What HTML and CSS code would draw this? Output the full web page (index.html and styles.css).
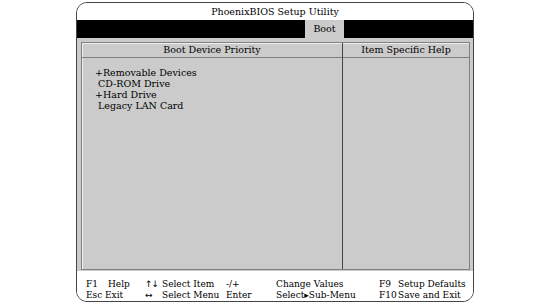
FILE: index.html
```html
<!DOCTYPE html>
<html lang="en">
<head>
  <meta charset="UTF-8" />
  <title>PhoenixBIOS Setup Utility</title>
  <link rel="stylesheet" href="styles.css">
</head>
<body>
  <div class="bios">
    <div class="title">PhoenixBIOS Setup Utility</div>
    <div class="menubar">
      <span class="tab">Boot</span>
    </div>

    <div class="workarea">
      <div class="panel">
        <div class="col main">
          <div class="head">Boot Device Priority</div>
          <ul class="devices">
            <li>+Removable Devices</li>
            <li class="leaf">CD-ROM Drive</li>
            <li>+Hard Drive</li>
            <li class="leaf">Legacy LAN Card</li>
          </ul>
        </div>
        <div class="col help">
          <div class="head">Item Specific Help</div>
        </div>
      </div>
    </div>

    <div class="keys">
      <span>F1</span><span class="wide">Help</span>
      <span class="arrows">&uarr;&darr;</span><span>Select Item</span>
      <span>-/+</span><span>Change Values</span>
      <span>F9</span><span>Setup Defaults</span>

      <span>Esc</span><span>Exit</span>
      <span class="arrows">&harr;</span><span>Select Menu</span>
      <span>Enter</span><span>Select&#9656;Sub-Menu</span>
      <span>F10</span><span>Save and Exit</span>
    </div>
  </div>
</body>
</html>
```

FILE: styles.css
```css
* { box-sizing: border-box; margin: 0; padding: 0; }
body {
  background: white;
  color: black;
  font-family: "DejaVu Serif", serif;
  font-size: 9.5px;
}

.bios {
  margin: 2px 0 0 76px;
  width: 398px;
  height: 300px;
  border: 1px solid #444;
  border-radius: 11px;
  overflow: hidden;
  display: flex;
  flex-direction: column;
}

.title {
  height: 17px;
  line-height: 17px;
  text-align: center;
  background: white;
}

.menubar {
  height: 18px;
  background: black;
  padding-left: 228px;
  display: flex;
}
.tab {
  width: 39px;
  background: #cbcbcb;
  text-align: center;
  line-height: 18px;
}

.workarea {
  height: 233px;
  background: #cbcbcb;
  padding: 4px 3px 1px 4px;
}

.panel {
  height: 100%;
  display: flex;
  border: 1px solid #808080;
  box-shadow: inset 1px 1px 0 #eee;
}

.col { display: flex; flex-direction: column; }
.main { flex: 1; border-right: 1px solid #444; }
.help { width: 126px; }

.head {
  height: 15px;
  line-height: 13px;
  text-align: center;
  border-bottom: 1px solid #808080;
}

.devices {
  list-style: none;
  padding: 9px 0 0 13px;
  line-height: 11px;
}
.devices .leaf { padding-left: 3px; }

.keys {
  flex: 1;
  background: white;
  padding: 8px 0 0 9px;
  font-size: 9px;
  display: grid;
  grid-template-columns: 16px 37px 14px 61px 47px 100px 16px auto;
  column-gap: 3px;
  grid-auto-rows: 11px;
  line-height: 11px;
  white-space: nowrap;
}
.keys .wide { padding-left: 3px; }
.keys .arrows { font-family: "DejaVu Sans", sans-serif; letter-spacing: -1px; }
```
